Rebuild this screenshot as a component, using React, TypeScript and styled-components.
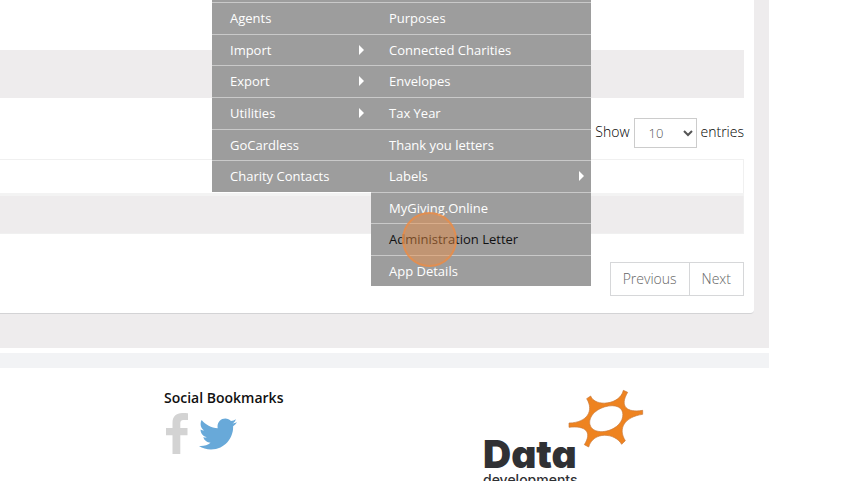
import React from "react";
import styled, { createGlobalStyle } from "styled-components";
import { FaTwitter } from "react-icons/fa";

const GlobalStyle = createGlobalStyle`
  * { box-sizing: border-box; }
  html, body { height: 100%; }
  body {
    margin: 0;
    overflow: hidden;
    background: #fff;
    color: #000;
    font: 300 14px/20px "Open Sans", sans-serif;
  }
`;

const Page = styled.div`
  position: relative;
  margin-right: 91px;
`;

const Content = styled.main`
  background: #eeeced;
  padding: 0 15px 34px 0;
`;

const Card = styled.section`
  background: #fff;
  border-bottom: 1px solid #d3d3d5;
  border-radius: 0 0 4px 0;
  padding: 50px 10px 17px 0;
`;

const Band = styled.div`
  height: 48px;
  background: #eeeced;
`;

const LengthControl = styled.label`
  display: flex;
  justify-content: flex-end;
  align-items: center;
  gap: 4px;
  margin: 20px 0 11px;
  line-height: 28px;
`;

const LengthText = styled.span`
  height: 30px;
`;

const LengthSelect = styled.select`
  width: 63px;
  height: 30px;
  padding: 0 0 0 10px;
  border: 1px solid #ccc;
  border-radius: 0;
  background: #fff;
  color: #555;
  font: 300 13px "Open Sans", sans-serif;
`;

const DataTable = styled.table`
  width: 100%;
  border-collapse: collapse;
  border: 1px solid #f0f0f0;
  border-left: 0;
`;

const Cell = styled.td<{ $shaded?: boolean }>`
  height: ${(p) => (p.$shaded ? 39 : 35)}px;
  padding: 0;
  border-top: ${(p) => (p.$shaded ? "3px solid #f3f3f3" : "0")};
  background: ${(p) => (p.$shaded ? "#eeeced" : "#fff")};
`;

const Pager = styled.nav`
  display: flex;
  justify-content: flex-end;
  margin-top: 28px;
`;

const PageButton = styled.button`
  height: 34px;
  padding: 0 12px;
  border: 1px solid #d6d7d9;
  background: #fff;
  color: #666;
  font: 300 14px/20px "Open Sans", sans-serif;

  & + & { border-left: 0; }
`;

const Strip = styled.div`
  height: 15px;
  margin-top: 5px;
  background: #f2f3f5;
`;

const Footer = styled.footer`
  display: grid;
  grid-template-columns: 319px 1fr;
  padding: 20px 0 0 164px;
`;

const SocialTitle = styled.h2`
  margin: 0;
  color: #111;
  font-size: 14px;
  font-weight: 600;
  line-height: 20px;
`;

const SocialLinks = styled.div`
  display: flex;
  gap: 10px;
  padding: 4px 0 0 1px;
`;

const SocialLink = styled.a<{ $color: string }>`
  display: flex;
  align-items: center;
  height: 43px;
  color: ${(p) => p.$color};
`;

const Logo = styled.div`
  position: relative;
  padding-top: 47px;
  color: #303134;
  font-family: Inter, sans-serif;
  font-feature-settings: "cv11";
`;

const LogoName = styled.div`
  font-size: 39px;
  font-weight: 900;
  line-height: 38px;
`;

const LogoSub = styled.div`
  font-size: 14px;
  font-weight: 500;
  line-height: 14px;
`;

const LogoStar = styled.svg`
  position: absolute;
  left: 77px;
  top: -6px;
`;

const Menus = styled.nav`
  position: absolute;
  top: 0;
  left: 212px;
  display: flex;
  align-items: flex-start;
`;

const MenuList = styled.ul<{ $width: number }>`
  display: grid;
  width: ${(p) => p.$width}px;
  margin: 0;
  padding: 2px 0 0;
  list-style: none;
  background: #9d9d9d;
`;

const MenuItem = styled.li`
  height: 32px;
  border-top: 1px solid #c9c9c9;

  &:nth-child(2),
  &:nth-child(5),
  &:nth-child(7),
  &:nth-child(9) {
    height: 31px;
  }
`;

const MenuLink = styled.a<{ $active?: boolean }>`
  display: flex;
  align-items: center;
  justify-content: space-between;
  height: 30px;
  padding: 0 7px 0 18px;
  color: ${(p) => (p.$active ? "#111" : "#fff")};
  font-size: 13px;
  font-weight: 400;
  text-decoration: none;
  white-space: nowrap;
`;

const ClickMarker = styled.span`
  position: absolute;
  left: 190px;
  top: 212px;
  width: 55px;
  height: 55px;
  border: 2px solid rgba(235, 140, 70, 0.75);
  border-radius: 50%;
  background: rgba(238, 140, 65, 0.45);
  pointer-events: none;
`;

type Entry = { label: string; more?: boolean; active?: boolean };

const mainEntries: Entry[] = [
  { label: "Agents" },
  { label: "Import", more: true },
  { label: "Export", more: true },
  { label: "Utilities", more: true },
  { label: "GoCardless" },
  { label: "Charity Contacts" },
];

const subEntries: Entry[] = [
  { label: "Purposes" },
  { label: "Connected Charities" },
  { label: "Envelopes" },
  { label: "Tax Year" },
  { label: "Thank you letters" },
  { label: "Labels", more: true },
  { label: "MyGiving.Online" },
  { label: "Administration Letter", active: true },
  { label: "App Details" },
];

function Menu({ entries, width }: { entries: Entry[]; width: number }) {
  return (
    <MenuList $width={width}>
      {entries.map((e) => (
        <MenuItem key={e.label}>
          <MenuLink href="#" $active={e.active}>
            {e.label}
            {e.more && (
              <svg width="5" height="10" viewBox="0 0 5 10" aria-hidden="true">
                <path d="M0 0 5 5 0 10Z" fill="#fff" />
              </svg>
            )}
          </MenuLink>
        </MenuItem>
      ))}
    </MenuList>
  );
}

export default function App() {
  return (
    <>
      <GlobalStyle />
      <Page>
        <Content>
          <Card>
            <Band />
            <LengthControl>
              <LengthText>Show</LengthText>
              <LengthSelect defaultValue="10">
                <option>10</option>
                <option>25</option>
                <option>50</option>
                <option>100</option>
              </LengthSelect>
              <LengthText>entries</LengthText>
            </LengthControl>
            <DataTable>
              <tbody>
                <tr><Cell /></tr>
                <tr><Cell $shaded /></tr>
              </tbody>
            </DataTable>
            <Pager aria-label="Pagination">
              <PageButton type="button">Previous</PageButton>
              <PageButton type="button">Next</PageButton>
            </Pager>
          </Card>
        </Content>
        <Strip />
        <Footer>
          <section>
            <SocialTitle>Social Bookmarks</SocialTitle>
            <SocialLinks>
              <SocialLink href="#" aria-label="Facebook" $color="#d3d3d3">
                <svg width="24" height="43" viewBox="0 0 24 43" fill="currentColor">
                  <path d="M23 1.3V8h-4c-3 0-3.700 1.500-3.700 3.700V16H22.500v7.300h-7.200V42H7.500V23.300H1V16h6.500v-5.200C7.500 4.500 11.300 1 17.200 1c2.700 0 5 .1 5.800.3Z" />
                </svg>
              </SocialLink>
              <SocialLink href="#" aria-label="Twitter" $color="#68a9d9">
                <FaTwitter size={38} />
              </SocialLink>
            </SocialLinks>
          </section>
          <Logo>
            <LogoStar width="90" height="70" viewBox="0 0 270 210" aria-hidden="true">
              <path
                fill="#ee8320"
                stroke="#c8783a"
                strokeWidth="2"
                fillRule="evenodd"
                d="M27 123C83 122 102 85 80 50L92 42C105 76 180 69 190 25L203 31C178 73 200 93 248 85V97C193 105 173 140 196 176L185 187C165 152 100 147 86 195L73 188C97 150 77 130 27 136ZM90 128C97 155 142 155 170 133C191 116 193 92 182 80C167 64 126 71 104 91C91 103 87 118 90 128Z"
              />
            </LogoStar>
            <LogoName>Data</LogoName>
            <LogoSub>developments</LogoSub>
          </Logo>
        </Footer>
        <Menus aria-label="Administration">
          <Menu entries={mainEntries} width={159} />
          <Menu entries={subEntries} width={220} />
          <ClickMarker />
        </Menus>
      </Page>
    </>
  );
}
